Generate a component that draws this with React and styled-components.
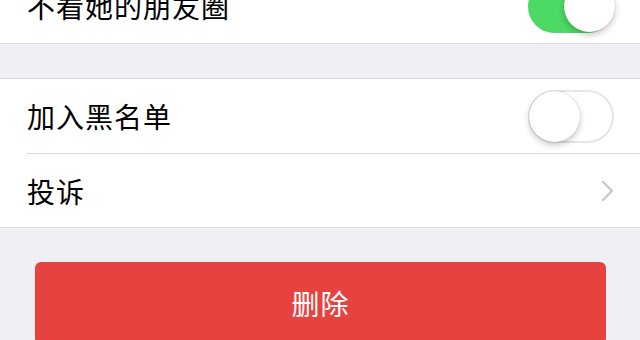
import styled, { createGlobalStyle } from "styled-components";

const GlobalStyle = createGlobalStyle`
    html, body {
        margin: 0;
        padding: 0;
        background: #efeff4;
    }
    body {
        font-family: "Noto Sans CJK SC", "Noto Sans", sans-serif;
        -webkit-font-smoothing: antialiased;
    }
`;

const Page = styled.div`
    width: 640px;
    height: 340px;
    overflow: hidden;
    background: #efeff4;
`;

// page is scrolled down a bit, first row is half hidden
const Scroll = styled.div`
    margin-top: -32px;
`;

const Group = styled.div`
    background: #ffffff;
    border-top: 1px solid #d9d9d9;
    border-bottom: 1px solid #d9d9d9;
    margin-bottom: 34px;
`;

const Row = styled.div`
    display: flex;
    align-items: center;
    justify-content: space-between;
    height: 74px;
    padding: 0 26px 0 27px;
    box-sizing: border-box;
    position: relative;

    & + & {
        border-top: 1px solid #d9d9d9;
        margin-left: 27px;
        padding-left: 0;
    }
`;

const Label = styled.span`
    font-size: 28px;
    color: #000000;
    line-height: 1;
    letter-spacing: 1px;
`;

const SwitchTrack = styled.div`
    width: 86px;
    height: 53px;
    border-radius: 27px;
    box-sizing: border-box;
    position: relative;
    background: ${p => (p.$on ? "#4cd964" : "#ffffff")};
    border: 2px solid ${p => (p.$on ? "#4cd964" : "#e5e5ea")};
`;

const Knob = styled.div`
    position: absolute;
    top: -1px;
    left: ${p => (p.$on ? "34px" : "-1px")};
    width: 51px;
    height: 51px;
    border-radius: 50%;
    background: #ffffff;
    box-shadow: 0 3px 6px rgba(0, 0, 0, 0.22), 0 0 1px rgba(0, 0, 0, 0.25);
`;

const Switch = ({ on }) => (
    <SwitchTrack $on={on}>
        <Knob $on={on} />
    </SwitchTrack>
);

const Chevron = () => (
    <svg width="13" height="22" viewBox="0 0 13 22">
        <path d="M2 2 L11 11 L2 20" fill="none" stroke="#c7c7cc" strokeWidth="2.4" strokeLinecap="round" strokeLinejoin="round" />
    </svg>
);

const ButtonArea = styled.div`
    padding: 0 34px 0 35px;
`;

const DangerButton = styled.button`
    display: block;
    width: 100%;
    height: 82px;
    border: none;
    border-radius: 6px;
    background: #e64340;
    color: #ffffff;
    font-family: "Noto Sans CJK SC", "Noto Sans", sans-serif;
    font-size: 28px;
    letter-spacing: 1px;
    cursor: pointer;
`;

export default function App() {
    return (
        <Page>
            <GlobalStyle />
            <Scroll>
                <Group>
                    <Row>
                        <Label>不看她的朋友圈</Label>
                        <Switch on />
                    </Row>
                </Group>
                <Group>
                    <Row>
                        <Label>加入黑名单</Label>
                        <Switch on={false} />
                    </Row>
                    <Row>
                        <Label>投诉</Label>
                        <Chevron />
                    </Row>
                </Group>
                <ButtonArea>
                    <DangerButton>删除</DangerButton>
                </ButtonArea>
            </Scroll>
        </Page>
    );
}
